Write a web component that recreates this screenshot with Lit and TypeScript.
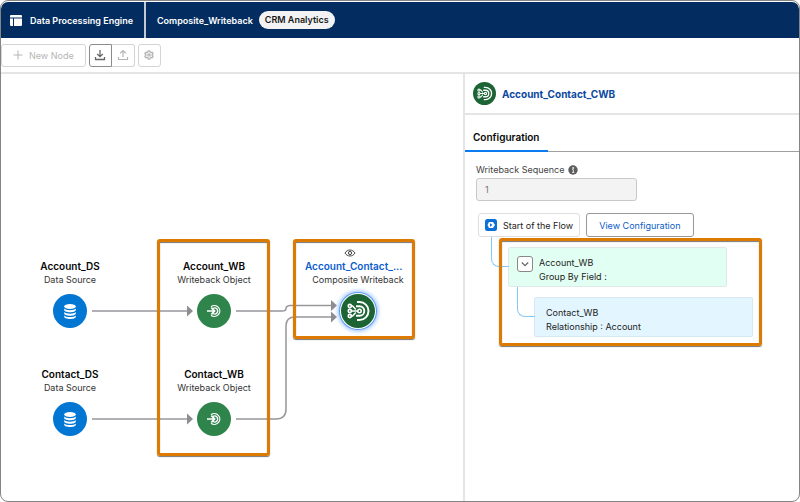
import { LitElement, html, css, svg, nothing } from "lit";
import { customElement, property } from "lit/decorators.js";
import { styleMap } from "lit/directives/style-map.js";
import { classMap } from "lit/directives/class-map.js";

const downloadIcon = html`<svg viewBox="0 0 12 12" width="12" height="12" fill="none" stroke="currentColor" stroke-width="1.3" aria-hidden="true"><path d="M6 1v6.5M3.2 5 6 7.7 8.8 5M1.500 8v2.500h9V8"/></svg>`;
const uploadIcon = html`<svg viewBox="0 0 12 12" width="12" height="12" fill="none" stroke="currentColor" stroke-width="1.2" aria-hidden="true"><path d="M6 8V1.5M3.2 4.2 6 1.5l2.8 2.7M1.500 8v2.500h9V8"/></svg>`;
const gearIcon = html`<svg viewBox="0 0 12 12" width="10" height="10" fill="none" stroke="currentColor" stroke-width="1.6" stroke-linejoin="round" aria-hidden="true"><path d="M5 1h2l.4 1.5 1 .6L9.900 2.700l1 1.700L9.800 5.500v1l1.100 1.100-1 1.700-1.500-.4-1 .6L7 11H5l-.4-1.500-1-.6-1.500.4-1-1.700L2.200 6.500v-1L1.100 4.400l1-1.700 1.500.4 1-.6z"/><circle cx="6" cy="6" r="1.300"/></svg>`;

const glyphs = {
  source: svg`<svg viewBox="0 0 34 34" width="34" height="34" fill="#fff" aria-hidden="true">
    <ellipse cx="17" cy="12.500" rx="5.800" ry="2.500"/>
    <path d="M11.200 14.600c1.500 2.200 10.100 2.200 11.600 0v1.500c0 3-11.600 3-11.600 0zM11.200 18c1.500 2.200 10.100 2.200 11.600 0v1.500c0 3-11.600 3-11.600 0zM11.200 21.400c1.500 2.200 10.100 2.200 11.600 0v1.300c0 3-11.600 3-11.600 0z"/></svg>`,
  writeback: svg`<svg viewBox="0 0 34 34" width="34" height="34" fill="none" stroke="#fff" stroke-width="1.300" aria-hidden="true">
    <path d="M14 12.800a5.400 5.400 0 1 1 0 8.400"/><path d="M16 14.500a3 3 0 1 1 0 5"/>
    <path d="M10 17h7.500M14.300 13.700 17.600 17l-3.300 3.300" stroke-width="1.700"/></svg>`,
  composite: svg`<svg viewBox="0 0 34 34" width="34" height="34" fill="none" stroke="#fff" stroke-width="1.600" aria-hidden="true">
    <path d="M16 8h2.500a9 9 0 0 1 0 18H16" stroke-width="2"/>
    <path d="M15 12.200h3.500a4.800 4.800 0 0 1 0 9.600H15" stroke-width="1.900"/>
    <circle cx="18.500" cy="17" r="1.700"/>
    <circle cx="8.800" cy="12" r="1.600"/><circle cx="8.800" cy="17" r="1.600"/><circle cx="8.800" cy="22" r="1.600"/>
    <path d="M10.400 17h6.400M10.400 12h1.200l3.200 3.500M10.400 22h1.200l3.200-3.500" stroke-width="1.500"/></svg>`,
};
type Kind = keyof typeof glyphs;

@customElement("flow-node")
class FlowNode extends LitElement {
  @property() kind: Kind = "source";
  @property() name = "";
  @property() type = "";
  @property({ type: Boolean }) selected = false;

  static styles = css`
    :host { display: flex; flex-direction: column; align-items: center; width: 106px; text-align: center; position: relative; }
    .name { font-size: 10px; font-weight: 600; line-height: 14px; color: #080707; white-space: nowrap; }
    .type { font-size: 9px; line-height: 14px; color: #333; white-space: nowrap; }
    .disc { display: flex; width: 34px; height: 34px; margin-top: 7px; border-radius: 50%; border: 0; padding: 0; }
    .source { background: #0176d3; }
    .writeback { background: #2e844a; }
    .composite { background: #1c6434; }
    .selected { box-shadow: 0 0 0 1px #fff, 0 0 0 2px #5a9af5, 0 0 4px 3px #8dbcff; }
    .active { align-self: flex-start; color: #0b5cd0; }
    .eye { position: absolute; bottom: 100%; left: 39px; }
  `;

  render() {
    return html`
      ${this.selected ? html`<svg class="eye" viewBox="0 0 12 12" width="12" height="12" fill="none" stroke="#444" aria-hidden="true"><path d="M1 6c2.300-4 7.700-4 10 0-2.300 4-7.700 4-10 0z"/><circle cx="6" cy="6" r="1.600"/></svg>` : nothing}
      <span class=${classMap({ name: true, active: this.selected })}>${this.name}</span>
      <span class="type">${this.type}</span>
      <button class=${classMap({ disc: true, [this.kind]: true, selected: this.selected })} aria-label=${this.name}>${glyphs[this.kind]}</button>`;
  }
}

const nodes: { name: string; type: string; kind: Kind; x: number; y: number; selected?: boolean }[] = [
  { name: "Account_DS", type: "Data Source", kind: "source", x: 16, y: 185 },
  { name: "Contact_DS", type: "Data Source", kind: "source", x: 16, y: 293 },
  { name: "Account_WB", type: "Writeback Object", kind: "writeback", x: 160, y: 185 },
  { name: "Contact_WB", type: "Writeback Object", kind: "writeback", x: 160, y: 293 },
  { name: "Account_Contact_...", type: "Composite Writeback", kind: "composite", x: 304, y: 185, selected: true },
];
const edges = [
  { line: "M91 237H186", tip: [192, 237] },
  { line: "M91 345H186", tip: [192, 345] },
  { line: "M235 237H281Q285 237 285 234.500T289 231.500H330", tip: [336, 231.500] },
  { line: "M235 345H275Q285 345 285 335V252Q285 243 294 243H330", tip: [336, 243] },
];
const highlights = [
  { left: 156, top: 165, width: 113, height: 217 },
  { left: 292, top: 165, width: 122, height: 100 },
];

@customElement("app-root")
class AppRoot extends LitElement {
  static styles = css`
    :host { display: block; font-family: Inter, "Liberation Sans", sans-serif; font-size: 9px; color: #222; background: #fff; }
    *, *::before { box-sizing: border-box; }
    button, input { font: inherit; }
    .frame { display: flex; flex-direction: column; min-height: 100vh; border: 1px solid #858585; border-radius: 8px; overflow: hidden; }
    .bar { display: flex; align-items: stretch; height: 36px; margin-top: 1px; background: #032d60; color: #fff; font-weight: 600; border-radius: 7px 7px 0 0; }
    .brand { display: flex; align-items: center; gap: 8px; padding: 0 11px 0 9px; border-right: 2px solid #c4c8d4; }
    .file { display: flex; align-items: center; gap: 6px; padding-left: 11px; }
    .pill { background: #f3f3f3; color: #181818; border-radius: 9px; line-height: 18px; padding: 0 6px; }
    .tools { display: flex; align-items: center; gap: 3px; height: 36px; border-bottom: 2px solid #e5e5e5; }
    .btn { display: flex; align-items: center; justify-content: center; height: 23px; border: 1px solid #d4d4d4; border-radius: 3px; background: #fff; color: #b5b5b5; padding: 0; }
    .new { gap: 6px; padding: 0 11px; }
    .group { display: flex; }
    .square { width: 23px; }
    .first { border-color: #8c8c8c; color: #666; border-radius: 3px 0 0 3px; }
    .last { border-left: 0; border-radius: 0 3px 3px 0; }
    .main { display: flex; flex: 1; }
    .canvas { flex: 1; position: relative; min-width: 0; }
    .edges { position: absolute; inset: 0; width: 100%; height: 100%; }
    .node { position: absolute; }
    .mark { position: absolute; border: 3px solid #dd7a01; border-radius: 3px; box-shadow: 0 1px 1px #777, inset 0 1px 1px #777; pointer-events: none; }
    .panel { flex: 0 0 336px; border-left: 2px solid #e5e5e5; }
    .title { display: flex; align-items: center; gap: 6px; height: 41px; padding-left: 8px; border-bottom: 2px solid #e5e5e5; }
    .title h1 { margin: 0; font-size: 10px; font-weight: 700; color: #0b489f; }
    .badge { display: flex; width: 23px; height: 23px; border-radius: 50%; background: #1c6434; }
    .badge svg { width: 23px; height: 23px; }
    .tabs { display: flex; height: 37px; padding-top: 8px; box-shadow: inset 0 -1px #a0a0a0; }
    .tab { border: 0; border-bottom: 2px solid #0b7bf0; background: none; font-size: 10px; font-weight: 600; color: #080707; padding: 0 8px; }
    .body { padding: 12px 11px; }
    .label { display: flex; align-items: center; gap: 4px; line-height: 12px; color: #444; margin-bottom: 2px; }
    .field { display: block; width: 161px; height: 23px; border: 1px solid #c9c9c9; border-radius: 3px; background: #f3f3f3; color: #747474; padding: 0 8px; }
    .start { display: flex; gap: 6px; margin: 12px 0 0 2px; }
    .chip { display: flex; align-items: center; gap: 6px; height: 24px; border: 1px solid #dedede; border-radius: 3px; padding: 0 6px; }
    .view { height: 24px; border: 1px solid #999; border-radius: 3px; background: #fff; color: #0b5cc8; padding: 0 12px; }
    .tree { position: relative; display: grid; gap: 10px; margin: 10px 0 0 32px; padding: 0; list-style: none; width: 245px; }
    .item { position: relative; display: flex; gap: 6px; width: 219px; height: 40px; border: 1px solid #dde9e6; border-radius: 2px; padding: 8px; background: #e2fff3; }
    .item::before { content: ""; position: absolute; right: 100%; top: -11px; width: 18px; height: 30px; border: solid #84c9fa; border-width: 0 0 1px 1px; border-bottom-left-radius: 8px; }
    .child { margin-left: 26px; background: #e3f6ff; border-color: #d8e8f0; padding: 8px 11px; }
    .toggle { display: flex; align-items: center; justify-content: center; width: 16px; height: 16px; border: 1px solid #888; border-radius: 3px; background: #fff; padding: 0; }
    .text { display: grid; align-content: start; line-height: 14px; }
    .around { inset: -9px; }
  `;

  render() {
    return html`
      <div class="frame">
        <header class="bar">
          <div class="brand">
            <svg viewBox="0 0 12 11" width="12" height="11" fill="#fff" aria-hidden="true"><path d="M1 0h10a1 1 0 0 1 1 1v1.500H0V1a1 1 0 0 1 1-1zM0 3.500h3V11H1a1 1 0 0 1-1-1zM4 3.500h8V10a1 1 0 0 1-1 1H4z"/></svg>
            <span>Data Processing Engine</span>
          </div>
          <div class="file"><span>Composite_Writeback</span><span class="pill">CRM Analytics</span></div>
        </header>
        <div class="tools">
          <button class="btn new"><svg viewBox="0 0 10 10" width="10" height="10" stroke="currentColor" aria-hidden="true"><path d="M5 0.500v9M0.500 5h9"/></svg>New Node</button>
          <div class="group">
            <button class="btn square first" aria-label="Download">${downloadIcon}</button>
            <button class="btn square last" aria-label="Upload">${uploadIcon}</button>
          </div>
          <button class="btn square" aria-label="Settings">${gearIcon}</button>
        </div>
        <div class="main">
          <main class="canvas">
            <svg class="edges" aria-hidden="true">
              ${edges.map((e) => svg`<path d=${e.line} fill="none" stroke="#97979c" stroke-width="1.500"/><path d=${`M${e.tip[0]} ${e.tip[1]}l-6-5.500v11z`} fill="#8c8c91"/>`)}
            </svg>
            ${nodes.map((n) => html`<flow-node class="node" style=${styleMap({ left: n.x + "px", top: n.y + "px" })} .name=${n.name} .type=${n.type} .kind=${n.kind} .selected=${!!n.selected}></flow-node>`)}
            ${highlights.map((h) => html`<div class="mark" style=${styleMap({ left: h.left + "px", top: h.top + "px", width: h.width + "px", height: h.height + "px" })}></div>`)}
          </main>
          <aside class="panel">
            <div class="title"><span class="badge">${glyphs.composite}</span><h1>Account_Contact_CWB</h1></div>
            <div class="tabs" role="tablist"><button class="tab" role="tab" aria-selected="true">Configuration</button></div>
            <div class="body">
              <label class="label" for="sequence">Writeback Sequence
                <svg viewBox="0 0 10 10" width="10" height="10" aria-hidden="true"><circle cx="5" cy="5" r="4.700" fill="#5c5c5c"/><path d="M4.200 4.600H5.300V7.300M4 7.400h2.400M4.700 2.500h1v1h-1z" fill="none" stroke="#fff" stroke-width=".8"/></svg>
              </label>
              <input class="field" id="sequence" value="1" disabled>
              <div class="start">
                <div class="chip">
                  <svg viewBox="0 0 12 12" width="12" height="12" aria-hidden="true"><rect width="12" height="12" rx="2.500" fill="#0b70d8"/><path d="M4 3h4l2 3-2 3H4L2.500 6z" fill="#fff"/><path d="M5 4.200 7.500 6 5 7.800z" fill="#0b70d8"/></svg>
                  <span>Start of the Flow</span>
                </div>
                <button class="view">View Configuration</button>
              </div>
              <ul class="tree">
                <li class="item">
                  <button class="toggle" aria-label="Collapse" aria-expanded="true"><svg viewBox="0 0 8 8" width="8" height="8" fill="none" stroke="#666" stroke-width="1.200" aria-hidden="true"><path d="M.8 2.500 4 5.700l3.200-3.200"/></svg></button>
                  <div class="text"><span>Account_WB</span><span>Group By Field :</span></div>
                </li>
                <li class="item child">
                  <div class="text"><span>Contact_WB</span><span>Relationship : Account</span></div>
                </li>
                <li class="mark around" role="presentation"></li>
              </ul>
            </div>
          </aside>
        </div>
      </div>`;
  }
}
